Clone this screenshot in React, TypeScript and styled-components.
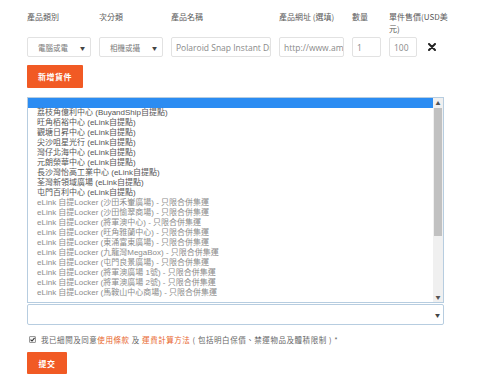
import React from "react";
import styled, { createGlobalStyle } from "styled-components";

const Global = createGlobalStyle`
  html, body { margin: 0; padding: 0; background: #fff; }
  body { font-family: "Open Sans", "Noto Sans CJK TC", sans-serif; color: #555; }
`;

const Page = styled.div`
  width: 500px;
  height: 387px;
  box-sizing: border-box;
  padding: 11px 0 0 27px;
  overflow: hidden;
`;

const FormGrid = styled.div`
  display: grid;
  grid-template-columns: 64px 64px 100px 65px 29px 28px 20px;
  grid-template-rows: 24px 20px;
  column-gap: 8px;
  row-gap: 2px;
`;

const Label = styled.div<{ $w?: number }>`
  font-size: 8px;
  line-height: 12px;
  color: #5a5a5a;
  white-space: ${(p) => (p.$w ? "normal" : "nowrap")};
  width: ${(p) => (p.$w ? `${p.$w}px` : "auto")};
  font-family: "Noto Sans CJK TC", sans-serif;
`;

const Field = styled.div`
  box-sizing: border-box;
  height: 20px;
  border: 1px solid #e2e2e2;
  border-radius: 2px;
  background: #fff;
  display: flex;
  align-items: center;
  padding: 0 4px;
  font-size: 8.5px;
  color: #8a8a8a;
  white-space: nowrap;
  overflow: hidden;
  font-family: "Open Sans", "Noto Sans CJK TC", sans-serif;
`;

const SelectField = styled(Field)`
  justify-content: space-between;
  padding: 0 5px 0 10px;
  font-size: 7.5px;
  color: #7a7a7a;
  font-family: "Noto Sans CJK TC", sans-serif;
`;

const Caret = styled.span`
  font-size: 5px;
  color: #444;
`;

const Remove = styled.div`
  display: flex;
  align-items: center;
  padding-left: 3px;
  height: 20px;
`;

const OrangeButton = styled.button<{ $w: number; $h: number; $mt: number }>`
  display: block;
  width: ${(p) => p.$w}px;
  height: ${(p) => p.$h}px;
  margin-top: ${(p) => p.$mt}px;
  border: none;
  border-radius: 1px;
  background: #f15a24;
  color: #fff;
  font-size: 8px;
  font-weight: bold;
  font-family: "Noto Sans CJK TC", sans-serif;
  padding: 0;
  letter-spacing: 0.5px;
`;

const ListBox = styled.div`
  box-sizing: border-box;
  width: 417px;
  height: 206px;
  margin-top: 9px;
  border: 1px solid #b7cde0;
  display: flex;
`;

const Options = styled.div`
  flex: 1;
  display: flex;
  flex-direction: column;
`;

const Option = styled.div<{ $selected?: boolean; $muted?: boolean }>`
  height: 10px;
  line-height: 10px;
  padding-left: 9px;
  font-size: 8px;
  white-space: nowrap;
  font-family: "Liberation Sans", "Noto Sans CJK TC", sans-serif;
  color: ${(p) => (p.$muted ? "#8c8c8c" : "#555")};
  background: ${(p) => (p.$selected ? "#2b8cf2" : "transparent")};
`;

const ScrollBar = styled.div`
  width: 10px;
  background: #f0f0f0;
  display: flex;
  flex-direction: column;
`;

const ScrollArrow = styled.div`
  height: 10px;
  display: flex;
  align-items: center;
  justify-content: center;
  font-size: 5px;
  color: #555;
  line-height: 1;
`;

const Thumb = styled.div`
  height: 128px;
  margin: 0 1px;
  background: #c1c1c1;
`;

const Spacer = styled.div`
  flex: 1;
`;

const BottomSelect = styled.div`
  box-sizing: border-box;
  width: 417px;
  height: 21px;
  margin-top: 1px;
  border: 1px solid #b7cde0;
  border-radius: 2px;
  display: flex;
  align-items: center;
  justify-content: flex-end;
  padding-right: 3px;
`;

const AgreeRow = styled.div`
  display: flex;
  align-items: center;
  margin-top: 9px;
  height: 10px;
  font-size: 7.5px;
  letter-spacing: 0.55px;
  color: #666;
  font-family: "Noto Sans CJK TC", sans-serif;
  white-space: nowrap;
`;

const CheckBox = styled.span`
  box-sizing: border-box;
  width: 7px;
  height: 7px;
  border: 1px solid #999;
  border-radius: 1px;
  margin: 0 5px 0 2px;
  display: flex;
  align-items: center;
  justify-content: center;
  background: #f4f4f4;
`;

const Link = styled.span`
  color: #e8652c;
`;

const pickups = [
  "荔枝角億利中心 (BuyandShip自提點)",
  "旺角栢裕中心 (eLink自提點)",
  "觀塘日昇中心 (eLink自提點)",
  "尖沙咀星光行 (eLink自提點)",
  "灣仔北海中心 (eLink自提點)",
  "元朗榮華中心 (eLink自提點)",
  "長沙灣怡高工業中心 (eLink自提點)",
  "荃灣新領域廣場 (eLink自提點)",
  "屯門百利中心 (eLink自提點)",
];

const lockers = [
  "沙田禾輋廣場",
  "沙田愉翠商場",
  "將軍澳中心",
  "旺角雅蘭中心",
  "東涌富東廣場",
  "九龍灣MegaBox",
  "屯門良景廣場",
  "將軍澳廣場 1號",
  "將軍澳廣場 2號",
  "馬鞍山中心商場",
];

export default function App() {
  return (
    <Page>
      <Global />
      <FormGrid>
        <Label>產品類別</Label>
        <Label>次分類</Label>
        <Label>產品名稱</Label>
        <Label>產品網址 (選填)</Label>
        <Label>數量</Label>
        <Label $w={62}>單件售價(USD美元)</Label>
        <div />
        <SelectField>
          <span>電腦或電</span>
          <Caret>▼</Caret>
        </SelectField>
        <SelectField>
          <span>相機或攝</span>
          <Caret>▼</Caret>
        </SelectField>
        <Field>Polaroid Snap Instant Di</Field>
        <Field>http://www.am</Field>
        <Field>1</Field>
        <Field>100</Field>
        <Remove>
          <svg width="8" height="8" viewBox="0 0 8 8">
            <path d="M1 1 L7 7 M7 1 L1 7" stroke="#222" strokeWidth="2" strokeLinecap="round" />
          </svg>
        </Remove>
      </FormGrid>
      <OrangeButton $w={56} $h={23} $mt={8}>新增貨件</OrangeButton>
      <ListBox>
        <Options>
          <Option $selected>&nbsp;</Option>
          {pickups.map((p) => (
            <Option key={p}>{p}</Option>
          ))}
          {lockers.map((l) => (
            <Option key={l} $muted>
              eLink 自提Locker ({l}) - 只限合併集運
            </Option>
          ))}
        </Options>
        <ScrollBar>
          <ScrollArrow>▲</ScrollArrow>
          <Thumb />
          <Spacer />
          <ScrollArrow>▼</ScrollArrow>
        </ScrollBar>
      </ListBox>
      <BottomSelect>
        <Caret>▼</Caret>
      </BottomSelect>
      <AgreeRow>
        <CheckBox>
          <svg width="5" height="5" viewBox="0 0 5 5">
            <path d="M0.5 2.6 L2 4 L4.6 0.8" stroke="#333" strokeWidth="1.1" fill="none" />
          </svg>
        </CheckBox>
        我已細閱及同意<Link>使用條款</Link>&nbsp;及&nbsp;<Link>運費計算方法</Link>&nbsp;( 包括明白保價、禁運物品及體積限制 ) *
      </AgreeRow>
      <OrangeButton $w={40} $h={22} $mt={8}>提交</OrangeButton>
    </Page>
  );
}
